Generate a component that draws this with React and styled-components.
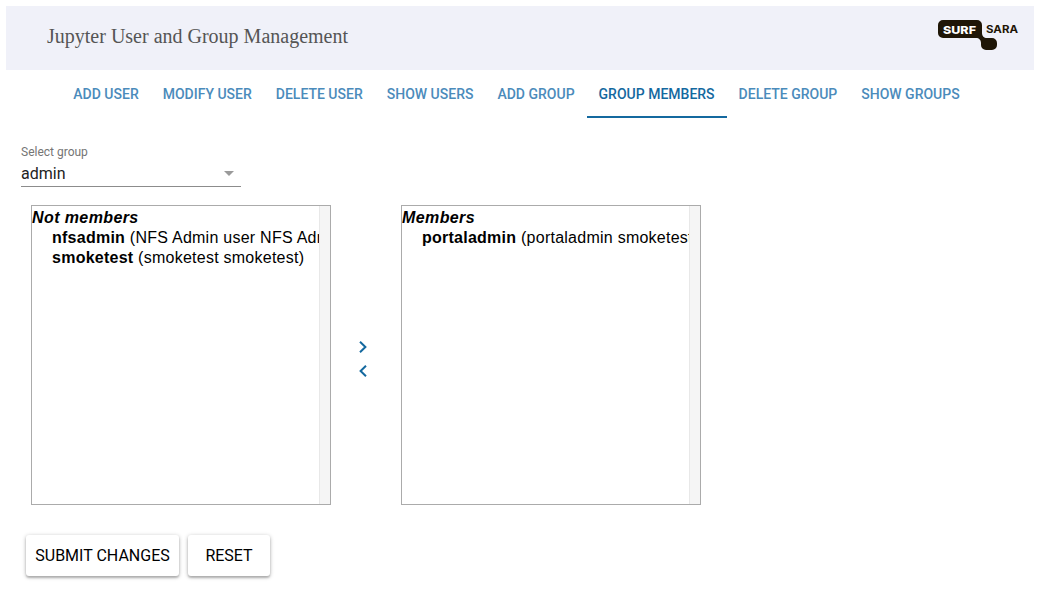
import React from "react";
import styled, { createGlobalStyle } from "styled-components";

const Global = createGlobalStyle`
  html, body { margin: 0; padding: 0; background: #fff; }
  * { box-sizing: border-box; }
`;

const Page = styled.div`
  width: 1040px;
  height: 591px;
  padding: 6px 6px 0;
  overflow: hidden;
`;

const Header = styled.header`
  height: 64px;
  background: #f0f1f9;
  display: flex;
  align-items: flex-start;
  justify-content: space-between;
  padding: 18px 14px 0 41px;
`;

const Title = styled.h1`
  margin: 0;
  font: 400 20px/25px "Liberation Serif", serif;
  color: #555;
`;

const Logo = styled.svg`
  width: 82px;
  height: 31px;
  margin-top: -4px;
  display: block;
`;

const Tabs = styled.nav`
  height: 48px;
  display: flex;
  justify-content: center;
  padding-right: 7px;
`;

const Tab = styled.div`
  padding: 2px 12px 0;
  display: flex;
  align-items: center;
  font: 500 14px/16px Roboto, sans-serif;
  color: ${(p) => (p.$active ? "#14699f" : "#4b8bbb")};
  border-bottom: 2px solid ${(p) => (p.$active ? "#14699f" : "transparent")};
  white-space: nowrap;
`;

const Content = styled.main`
  padding: 26px 0 0 15px;
`;

const Field = styled.div`
  width: 220px;
  height: 43px;
  border-bottom: 1px solid #8c8c8c;
  position: relative;
`;

const FieldLabel = styled.div`
  font: 400 12px/14px Roboto, sans-serif;
  color: #757575;
  padding-top: 1px;
`;

const FieldValue = styled.div`
  font: 400 16px/19px Roboto, sans-serif;
  color: #222;
  margin-top: 5px;
`;

const Caret = styled.span`
  position: absolute;
  right: 7px;
  top: 27px;
  width: 0;
  height: 0;
  border-left: 5px solid transparent;
  border-right: 5px solid transparent;
  border-top: 5px solid #9a9a9a;
`;

const Lists = styled.section`
  display: flex;
  align-items: stretch;
  margin: 18px 0 0 10px;
`;

const ListBox = styled.div`
  width: 300px;
  height: 300px;
  border: 1px solid #ababab;
  display: flex;
  background: #fff;
`;

const ListInner = styled.div`
  flex: 1;
  min-width: 0;
  overflow: hidden;
  font: 400 16px/20px "Liberation Sans", Arial, sans-serif;
  color: #000;
  padding-top: 2px;
`;

const ListHeading = styled.div`
  font-weight: 700;
  font-style: italic;
  letter-spacing: 0.4px;
`;

const ListItem = styled.div`
  padding-left: 20px;
  white-space: nowrap;
  letter-spacing: 0.25px;
  b { font-weight: 700; }
`;

const Scrollbar = styled.div`
  width: 11px;
  background: #f5f5f5;
  border-left: 1px solid #e8e8e8;
`;

const Transfer = styled.div`
  width: 70px;
  display: flex;
  flex-direction: column;
  align-items: center;
  justify-content: center;
  gap: 12px;
  padding: 8px 6px 0 0;
`;

const Arrow = styled.svg`
  width: 12px;
  height: 12px;
  display: block;
  fill: none;
  stroke: #14699f;
  stroke-width: 2;
`;

const Buttons = styled.div`
  display: flex;
  gap: 9px;
  margin: 30px 0 0 5px;
`;

const Button = styled.button`
  height: 41px;
  width: ${(p) => p.$width}px;
  padding: 0;
  border: 0;
  border-radius: 3px;
  background: #fff;
  color: #000;
  font: 400 16px/19px Roboto, sans-serif;
  box-shadow: 0 1px 4px rgba(0,0,0,.28), 0 2px 2px rgba(0,0,0,.18);
`;

const tabs = ["ADD USER", "MODIFY USER", "DELETE USER", "SHOW USERS", "ADD GROUP", "GROUP MEMBERS", "DELETE GROUP", "SHOW GROUPS"];

export default function App() {
  return (
    <Page>
      <Global />
      <Header>
        <Title>Jupyter User and Group Management</Title>
        <Logo viewBox="0 0 82 31">
          <path fill="#1f1607" d="M5 0H39a5 5 0 0 1 5 5v8c0 3 2 5 5 5h5a5 5 0 0 1 5 5v2a5 5 0 0 1-5 5h-6a5 5 0 0 1-5-5v-2c0-3-2-5-5-5H5a5 5 0 0 1-5-5V5a5 5 0 0 1 5-5z" />
          <text x="5" y="13.5" fontFamily="Inter, sans-serif" fontWeight="800" fontSize="11" textLength="33" lengthAdjust="spacingAndGlyphs" fill="#fff">SURF</text>
          <text x="48" y="13" fontFamily="Inter, sans-serif" fontWeight="700" fontSize="10.5" textLength="32" lengthAdjust="spacingAndGlyphs" fill="#1f1607">SARA</text>
        </Logo>
      </Header>
      <Tabs>
        {tabs.map((t) => (
          <Tab key={t} $active={t === "GROUP MEMBERS"}>{t}</Tab>
        ))}
      </Tabs>
      <Content>
        <Field>
          <FieldLabel>Select group</FieldLabel>
          <FieldValue>admin</FieldValue>
          <Caret />
        </Field>
        <Lists>
          <ListBox>
            <ListInner>
              <ListHeading>Not members</ListHeading>
              <ListItem><b>nfsadmin</b> (NFS Admin user NFS Admin user)</ListItem>
              <ListItem><b>smoketest</b> (smoketest smoketest)</ListItem>
            </ListInner>
            <Scrollbar />
          </ListBox>
          <Transfer>
            <Arrow viewBox="0 0 12 12"><path d="M3 0.8 8.4 6 3 11.2" /></Arrow>
            <Arrow viewBox="0 0 12 12"><path d="M9 0.8 3.6 6 9 11.2" /></Arrow>
          </Transfer>
          <ListBox>
            <ListInner>
              <ListHeading>Members</ListHeading>
              <ListItem><b>portaladmin</b> (portaladmin smoketest)</ListItem>
            </ListInner>
            <Scrollbar />
          </ListBox>
        </Lists>
        <Buttons>
          <Button $width={153}>SUBMIT CHANGES</Button>
          <Button $width={82}>RESET</Button>
        </Buttons>
      </Content>
    </Page>
  );
}
